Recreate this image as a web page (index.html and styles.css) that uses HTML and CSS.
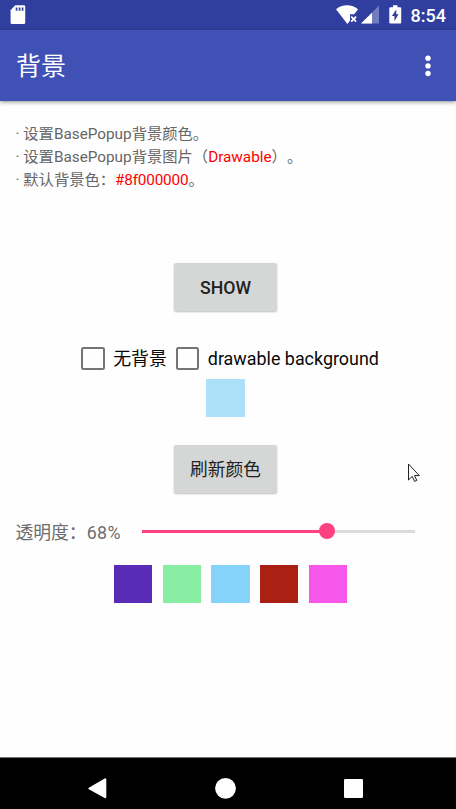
FILE: index.html
```html
<!DOCTYPE html>
<html lang="zh-CN">
<head>
<meta charset="utf-8">
<title>背景</title>
<link rel="stylesheet" href="styles.css">
</head>
<body>
<div class="status">
  <svg class="sd" width="16" height="20" viewBox="0 0 16 20"><path fill="#fff" d="M5.2 .3H14a1.2 1.2 0 0 1 1.2 1.2v16.2a1.2 1.2 0 0 1-1.2 1.2H1.8A1.2 1.2 0 0 1 .6 17.700V5.200z"/><path fill="#303f9f" d="M5.700 2.500h1.700v3.300H5.700zM8.700 2.500h1.700v3.300H8.700zM11.700 2.500h1.700v3.300h-1.700z"/></svg>
  <div class="tray">
    <svg width="23" height="20" viewBox="0 0 23 20"><path fill="#fff" d="M0 4.300C6-1.100 16-1.100 22 4.300L18.200 9.300H14v6.500L11.400 19z"/><path stroke="#fff" stroke-width="1.700" d="M15.200 11.700l4.900 5M20.100 11.700l-4.900 5"/></svg>
    <svg class="signal" width="19" height="19" viewBox="0 0 19 19"><path fill="#fff" fill-opacity=".32" d="M18 .5v18H0z"/><path fill="#fff" d="M11 7.700v10.800H0z"/></svg>
    <svg class="battery" width="13" height="19" viewBox="0 0 13 19"><path fill="#fff" d="M4 .3h4.500v1.900h2.700a1 1 0 0 1 1 1v14.300a1 1 0 0 1-1 1H1.300a1 1 0 0 1-1-1V3.200a1 1 0 0 1 1-1H4z"/><path fill="#303f9f" d="M7.300 4.500v4.700h2.300L5.400 16v-5H2.900z"/></svg>
    <span class="clock">8:54</span>
  </div>
</div>
<header class="bar">
  <h1>背景</h1>
  <svg width="6" height="22" viewBox="0 0 6 22"><g fill="#fff"><circle cx="3" cy="3.200" r="2.700"/><circle cx="3" cy="10.900" r="2.700"/><circle cx="3" cy="18.500" r="2.700"/></g></svg>
</header>
<main>
  <div class="notes">
    <p>· 设置BasePopup背景颜色。</p>
    <p>· 设置BasePopup背景图片（<em>Drawable</em>）。</p>
    <p>· 默认背景色：<em class="hex">#8f000000</em>。</p>
  </div>
  <button class="btn show">SHOW</button>
  <div class="checks">
    <label><i class="box"></i><span>无背景</span></label>
    <label><i class="box"></i><span>drawable background</span></label>
  </div>
  <div class="swatch current"></div>
  <button class="btn refresh">刷新颜色</button>
  <div class="alpha">
    <span class="alpha-text">透明度：<span class="percent">68%</span></span>
    <div class="track"><div class="fill" style="width:68%"></div><div class="thumb"></div></div>
  </div>
  <div class="palette">
    <div class="swatch purple"></div>
    <div class="swatch green"></div>
    <div class="swatch blue"></div>
    <div class="swatch red"></div>
    <div class="swatch pink"></div>
  </div>
</main>
<nav>
  <svg width="456" height="51" viewBox="0 0 456 51"><g fill="#fff"><path d="M88.800 29.800L104.700 20.400q1.600-.8 1.600 1v17.700q0 1.800-1.600 1L88.800 31.200q-1-.7 0-1.400z"/><circle cx="225.500" cy="30.300" r="10.400"/><rect x="344" y="21" width="19" height="19" rx="1.200"/></g></svg>
</nav>
<svg class="cursor" width="14" height="20" viewBox="0 0 14 20"><path fill="#fff" stroke="#222" stroke-width="1" d="M1.500 1v16l3.700-3.600 2.400 5 2.200-1-2.300-4.800h4.800z"/></svg>
</body>
</html>
```
FILE: styles.css
```css
* { box-sizing: border-box; }
body {
  margin: 0;
  width: 456px;
  height: 809px;
  overflow: hidden;
  display: flex;
  flex-direction: column;
  background: #fefefe;
  font-family: Roboto, "Noto Sans CJK SC", sans-serif;
  text-spacing-trim: space-all;
}
h1, p { margin: 0; }
svg { display: block; flex: none; }
.status {
  height: 30px;
  background: #303f9f;
  display: flex;
  justify-content: space-between;
  padding: 5px 10px 0;
}
.tray { display: flex; }
.signal { margin-left: 2px; }
.battery { margin-left: 9px; }
.clock {
  margin-left: 9px;
  color: #fff;
  font-size: 18px;
  font-weight: 500;
  line-height: 21px;
}
.bar {
  height: 71px;
  flex: none;
  background: #3f51b5;
  display: flex;
  align-items: center;
  justify-content: space-between;
  padding: 0 25px 0 16px;
  box-shadow: 0 1px 4px rgba(0, 0, 0, .45);
}
h1 {
  padding-top: 2px;
  color: #fff;
  font-size: 25px;
  font-weight: 400;
  line-height: 36px;
}
main {
  flex: 1;
  display: flex;
  flex-direction: column;
  align-items: center;
}
.notes {
  align-self: stretch;
  padding: 22px 16px 0 15.500px;
  color: #666;
  font-size: 15.3px;
  line-height: 23px;
}
.notes em { color: #f00; font-style: normal; }
.notes .hex { letter-spacing: -.18px; }
.btn {
  width: 103px;
  height: 48px;
  margin-right: 5px;
  padding: 0;
  border: 0;
  border-radius: 2px;
  background: #d5d7d6;
  box-shadow: 0 1px 2px rgba(0, 0, 0, .25);
  color: #212121;
  font: 500 17.7px/50px Roboto, "Noto Sans CJK SC", sans-serif;
}
.show { margin-top: 71px; }
.refresh { margin-top: 28px; font-weight: 400; }
.checks {
  display: flex;
  gap: 9px;
  margin-top: 34px;
  margin-left: 4px;
  height: 26px;
  color: #080808;
  font-size: 17.9px;
  line-height: 26px;
}
.checks label { display: flex; align-items: center; gap: 8.500px; white-space: nowrap; }
.checks span { padding-top: 2px; }
.box {
  width: 23.500px;
  height: 23px;
  border: 2px solid #757575;
  border-radius: 2.500px;
}
.swatch { width: 38.500px; height: 38px; }
.current { margin: 8px 5px 0 0; background: #ade0f9; }
.alpha {
  align-self: stretch;
  display: flex;
  align-items: center;
  height: 28px;
  margin-top: 24px;
  padding: 0 41px 0 15.500px;
}
.alpha-text {
  width: 126px;
  padding-top: 4px;
  color: #6d6d6d;
  font-size: 17.8px;
  line-height: 28px;
  white-space: nowrap;
}
.percent { letter-spacing: .4px; }
.track { flex: 1; display: flex; align-items: center; height: 3px; background: #dcdcdc; }
.fill { height: 3px; background: #ff4081; }
.thumb {
  flex: none;
  width: 16px;
  height: 16px;
  margin-left: -8px;
  border-radius: 50%;
  background: #ff4081;
}
.palette { display: flex; gap: 10.200px; margin: 20px 0 0 5px; }
.purple { background: #5a2cb5; }
.green { background: #89eea4; }
.blue { background: #86d3f9; }
.red { background: #aa2013; }
.pink { background: #f757ea; }
nav { height: 52px; border-top: 1px solid #777; background: #000; }
.cursor { position: absolute; left: 407px; top: 463px; }
```
